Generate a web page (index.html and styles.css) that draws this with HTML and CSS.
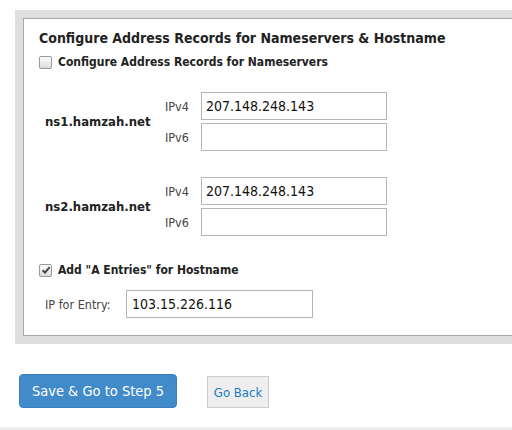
FILE: index.html
```html
<!DOCTYPE html>
<html>
<head>
<meta charset="utf-8">
<link rel="stylesheet" href="styles.css">
</head>
<body>
<div class="panel">
  <div class="box">
    <h2 class="title">Configure Address Records for Nameservers &amp; Hostname</h2>
    <label class="check"><span class="cb"></span>Configure Address Records for Nameservers</label>
    <div class="ns ns-first">
      <div class="ns-name">ns1.hamzah.net</div>
      <div class="ips">
        <div class="iprow"><span class="iplabel">IPv4</span><span class="inp">207.148.248.143</span></div>
        <div class="iprow"><span class="iplabel">IPv6</span><span class="inp"></span></div>
      </div>
    </div>
    <div class="ns">
      <div class="ns-name">ns2.hamzah.net</div>
      <div class="ips">
        <div class="iprow"><span class="iplabel">IPv4</span><span class="inp">207.148.248.143</span></div>
        <div class="iprow"><span class="iplabel">IPv6</span><span class="inp"></span></div>
      </div>
    </div>
    <label class="check check2"><span class="cb checked"><svg viewBox="0 0 10 10" width="10" height="10"><path d="M1.6 5.2 L4 7.6 L8.6 2.2" fill="none" stroke="#444" stroke-width="2"/></svg></span>Add "A Entries" for Hostname</label>
    <div class="entry">
      <span class="entry-label">IP for Entry:</span><span class="inp inp-entry">103.15.226.116</span>
    </div>
  </div>
</div>
<div class="actions">
  <button class="btn btn-primary">Save &amp; Go to Step 5</button>
  <button class="btn btn-default">Go Back</button>
</div>
<div class="footer-line"></div>
</body>
</html>
```
FILE: styles.css
```css
html, body {
  margin: 0;
  padding: 0;
  background: #fff;
}
body {
  font-family: "DejaVu Sans Condensed", "DejaVu Sans", sans-serif;
  color: #333;
  width: 512px;
  height: 430px;
  position: relative;
  overflow: hidden;
}
.panel {
  margin: 10px 0 0 15px;
  background: #dedede;
  padding: 8px 0 8px 8px;
}
.box {
  background: #fff;
  border: 1px solid #a8a8a8;
  border-right: none;
  padding: 9px 0 17px 15px;
}
.title {
  margin: 0;
  font-size: 14px;
  font-weight: bold;
  color: #222;
  line-height: 20px;
}
.check {
  display: flex;
  align-items: center;
  font-size: 12px;
  font-weight: bold;
  color: #222;
  margin-top: 5px;
  height: 18px;
}
.cb {
  width: 11px;
  height: 11px;
  border: 1px solid #999;
  border-radius: 2px;
  background: linear-gradient(#fcfcfc, #dcdcdc);
  margin-right: 6px;
  display: flex;
  align-items: center;
  justify-content: center;
}
.ns {
  display: flex;
  align-items: center;
  margin-top: 26px;
}
.ns-first {
  margin-top: 21px;
}
.ns-name {
  width: 120px;
  padding-left: 6px;
  font-size: 13px;
  font-weight: bold;
  color: #222;
}
.ips {
  display: flex;
  flex-direction: column;
  gap: 3px;
}
.iprow {
  display: flex;
  align-items: center;
}
.iplabel {
  width: 36px;
  font-size: 12.5px;
  color: #444;
}
.inp {
  box-sizing: border-box;
  width: 186px;
  height: 28px;
  border: 1px solid #b5b5b5;
  background: #fff;
  font-family: "DejaVu Sans Condensed", "DejaVu Sans", sans-serif;
  font-size: 14px;
  color: #111;
  padding: 0 4px;
  display: flex;
  align-items: center;
}
.check2 {
  margin-top: 25px;
}
.entry {
  display: flex;
  align-items: center;
  margin-top: 11px;
}
.entry-label {
  width: 81px;
  padding-left: 6px;
  font-size: 12.5px;
  color: #444;
}
.inp-entry {
  width: 187px;
  padding-left: 5px;
}
.actions {
  display: flex;
  align-items: center;
  margin: 30px 0 0 19px;
  gap: 30px;
}
.btn {
  font-family: "DejaVu Sans Condensed", "DejaVu Sans", sans-serif;
  font-size: 14.5px;
  cursor: pointer;
}
.btn-primary {
  width: 158px;
  height: 34px;
  background: #428bca;
  border: 1px solid #3a7fc0;
  border-radius: 4px;
  color: #fff;
}
.btn-default {
  width: 62px;
  height: 32px;
  margin-top: 2px;
  background: #eee;
  border: 1px solid #ccc;
  color: #1a7bc4;
  font-size: 13px;
  padding: 0;
}
.footer-line {
  position: absolute;
  left: 0;
  right: 0;
  bottom: 0;
  height: 3px;
  background: #eee;
}
```
